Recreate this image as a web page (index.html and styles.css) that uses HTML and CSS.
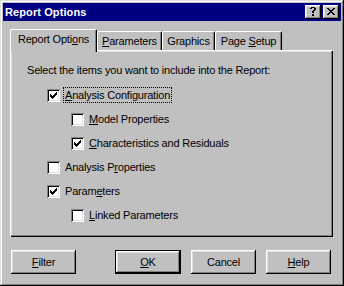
FILE: index.html
```html
<!DOCTYPE html>
<html>
<head>
<meta charset="utf-8">
<link rel="stylesheet" href="styles.css">
</head>
<body>
<div class="window">
  <div class="titlebar">
    <span class="title">Report Options</span>
    <div class="caption-btns">
      <div class="cap-btn">
        <svg width="6" height="9" viewBox="0 0 6 9" shape-rendering="crispEdges"><path d="M1 0h4v1H1z M0 1h2v1H0z M4 1h2v1H4z M4 2h2v1H4z M3 3h2v1H3z M2 4h2v2H2z M2 7h2v2H2z" fill="#000"/></svg>
      </div>
      <div class="cap-btn">
        <svg width="8" height="7" viewBox="0 0 8 7" shape-rendering="crispEdges"><path d="M0 0h2v1H0z M6 0h2v1H6z M1 1h2v1H1z M5 1h2v1H5z M2 2h4v1H2z M3 3h2v1H3z M2 4h4v1H2z M1 5h2v1H1z M5 5h2v1H5z M0 6h2v1H0z M6 6h2v1H6z" fill="#000"/></svg>
      </div>
    </div>
  </div>
  <div class="content">
    <div class="tabs">
      <div class="tab selected t1"><span>Report Opti<u>o</u>ns</span></div>
      <div class="tab t2"><span><u>P</u>arameters</span></div>
      <div class="tab t3"><span>Graphics</span></div>
      <div class="tab t4"><span>Page <u>S</u>etup</span></div>
    </div>
    <div class="panel">
      <p class="intro">Select the items you want to include into the Report:</p>
      <div class="items">
        <div class="row main"><span class="box checked"><svg width="9" height="9" viewBox="0 0 9 9" shape-rendering="crispEdges"><path d="M1 3h1v3H1z M2 4h1v3H2z M3 5h1v3H3z M4 4h1v3H4z M5 3h1v3H5z M6 2h1v3H6z M7 1h1v3H7z" fill="#000"/></svg></span><span class="label focus"><u>A</u>nalysis Configuration</span></div>
        <div class="row sub"><span class="box"></span><span class="label"><u>M</u>odel Properties</span></div>
        <div class="row sub"><span class="box checked"><svg width="9" height="9" viewBox="0 0 9 9" shape-rendering="crispEdges"><path d="M1 3h1v3H1z M2 4h1v3H2z M3 5h1v3H3z M4 4h1v3H4z M5 3h1v3H5z M6 2h1v3H6z M7 1h1v3H7z" fill="#000"/></svg></span><span class="label"><u>C</u>haracteristics and Residuals</span></div>
        <div class="row main"><span class="box"></span><span class="label">Analysis P<u>r</u>operties</span></div>
        <div class="row main"><span class="box checked"><svg width="9" height="9" viewBox="0 0 9 9" shape-rendering="crispEdges"><path d="M1 3h1v3H1z M2 4h1v3H2z M3 5h1v3H3z M4 4h1v3H4z M5 3h1v3H5z M6 2h1v3H6z M7 1h1v3H7z" fill="#000"/></svg></span><span class="label">Param<u>e</u>ters</span></div>
        <div class="row sub"><span class="box"></span><span class="label"><u>L</u>inked Parameters</span></div>
      </div>
    </div>
    <div class="buttons">
      <div class="btn filter"><span><u>F</u>ilter</span></div>
      <div class="btn default"><span><u>O</u>K</span></div>
      <div class="btn"><span>Cancel</span></div>
      <div class="btn"><span><u>H</u>elp</span></div>
    </div>
  </div>
</div>
</body>
</html>
```
FILE: styles.css
```css
html, body {
  margin: 0;
  padding: 0;
  background: #c0c0c0;
}
body {
  font-family: "Liberation Sans", Arial, sans-serif;
  font-size: 11px;
  letter-spacing: -0.2px;
  color: #000;
}
.window {
  width: 344px;
  height: 286px;
  box-sizing: border-box;
  padding: 3px;
  background: #c0c0c0;
  box-shadow: inset -1px -1px #000, inset 1px 1px #dfdfdf, inset -2px -2px #808080, inset 2px 2px #fff;
  display: flex;
  flex-direction: column;
}
.titlebar {
  height: 18px;
  background: #000080;
  display: flex;
  align-items: center;
  padding: 0 2px;
  color: #fff;
  font-weight: bold;
}
.title {
  flex: 1;
  letter-spacing: 0.1px;
}
.caption-btns {
  display: flex;
  gap: 2px;
}
.cap-btn {
  width: 16px;
  height: 14px;
  box-sizing: border-box;
  background: #c0c0c0;
  box-shadow: inset -1px -1px #000, inset 1px 1px #fff, inset -2px -2px #808080, inset 2px 2px #dfdfdf;
  display: flex;
  align-items: center;
  justify-content: center;
  padding: 0 1px 1px 0;
}
.cap-btn svg { display: block; }
.content {
  padding: 8px 8px 0 7px;
  display: flex;
  flex-direction: column;
}
.tabs {
  display: flex;
  align-items: flex-end;
  height: 21px;
}
.tab {
  height: 19px;
  box-sizing: border-box;
  background: #c0c0c0;
  border-left: 1px solid #fff;
  border-top: 1px solid #fff;
  border-right: 1px solid #000;
  border-top-left-radius: 2px;
  border-top-right-radius: 2px;
  box-shadow: inset -1px 0 #808080;
  display: flex;
  justify-content: center;
  padding-top: 3px;
  line-height: 13px;
}
.tab.selected {
  height: 23px;
  margin-bottom: -2px;
  position: relative;
  z-index: 1;
}
.t1 { width: 87px; }
.t2 { width: 65px; }
.t3 { width: 53px; }
.t4 { width: 67px; }
.panel {
  height: 187px;
  box-sizing: border-box;
  box-shadow: inset 1px 1px #fff, inset -1px -1px #000, inset -2px -2px #808080, inset 2px 2px #dfdfdf;
  display: flex;
  flex-direction: column;
}
.intro {
  margin: 0;
  padding: 14px 0 0 17px;
  line-height: 13px;
}
.items {
  display: flex;
  flex-direction: column;
  gap: 8px;
  margin-top: 10px;
}
.row {
  display: flex;
  align-items: center;
  height: 16px;
}
.row.main { padding-left: 37px; }
.row.sub { padding-left: 61px; }
.box {
  width: 13px;
  height: 13px;
  box-sizing: border-box;
  background: #fff;
  box-shadow: inset 1px 1px #808080, inset -1px -1px #fff, inset 2px 2px #000, inset -2px -2px #dfdfdf;
  display: flex;
  padding: 2px;
}
.box svg { display: block; }
.label {
  margin-left: 3px;
  padding: 0 1px;
  border: 1px solid transparent;
  line-height: 14px;
}
.label.focus {
  border: 1px dotted #000;
}
.buttons {
  display: flex;
  margin-top: 13px;
  padding-left: 1px;
}
.btn {
  width: 65px;
  height: 24px;
  box-sizing: border-box;
  background: #c0c0c0;
  box-shadow: inset -1px -1px #000, inset 1px 1px #fff, inset -2px -2px #808080, inset 2px 2px #dfdfdf;
  display: flex;
  align-items: center;
  justify-content: center;
  margin-left: 10px;
}
.btn.filter { margin-left: 0; margin-right: 29px; }
.btn.default {
  width: 66px;
  border: 1px solid #000;
}
```
